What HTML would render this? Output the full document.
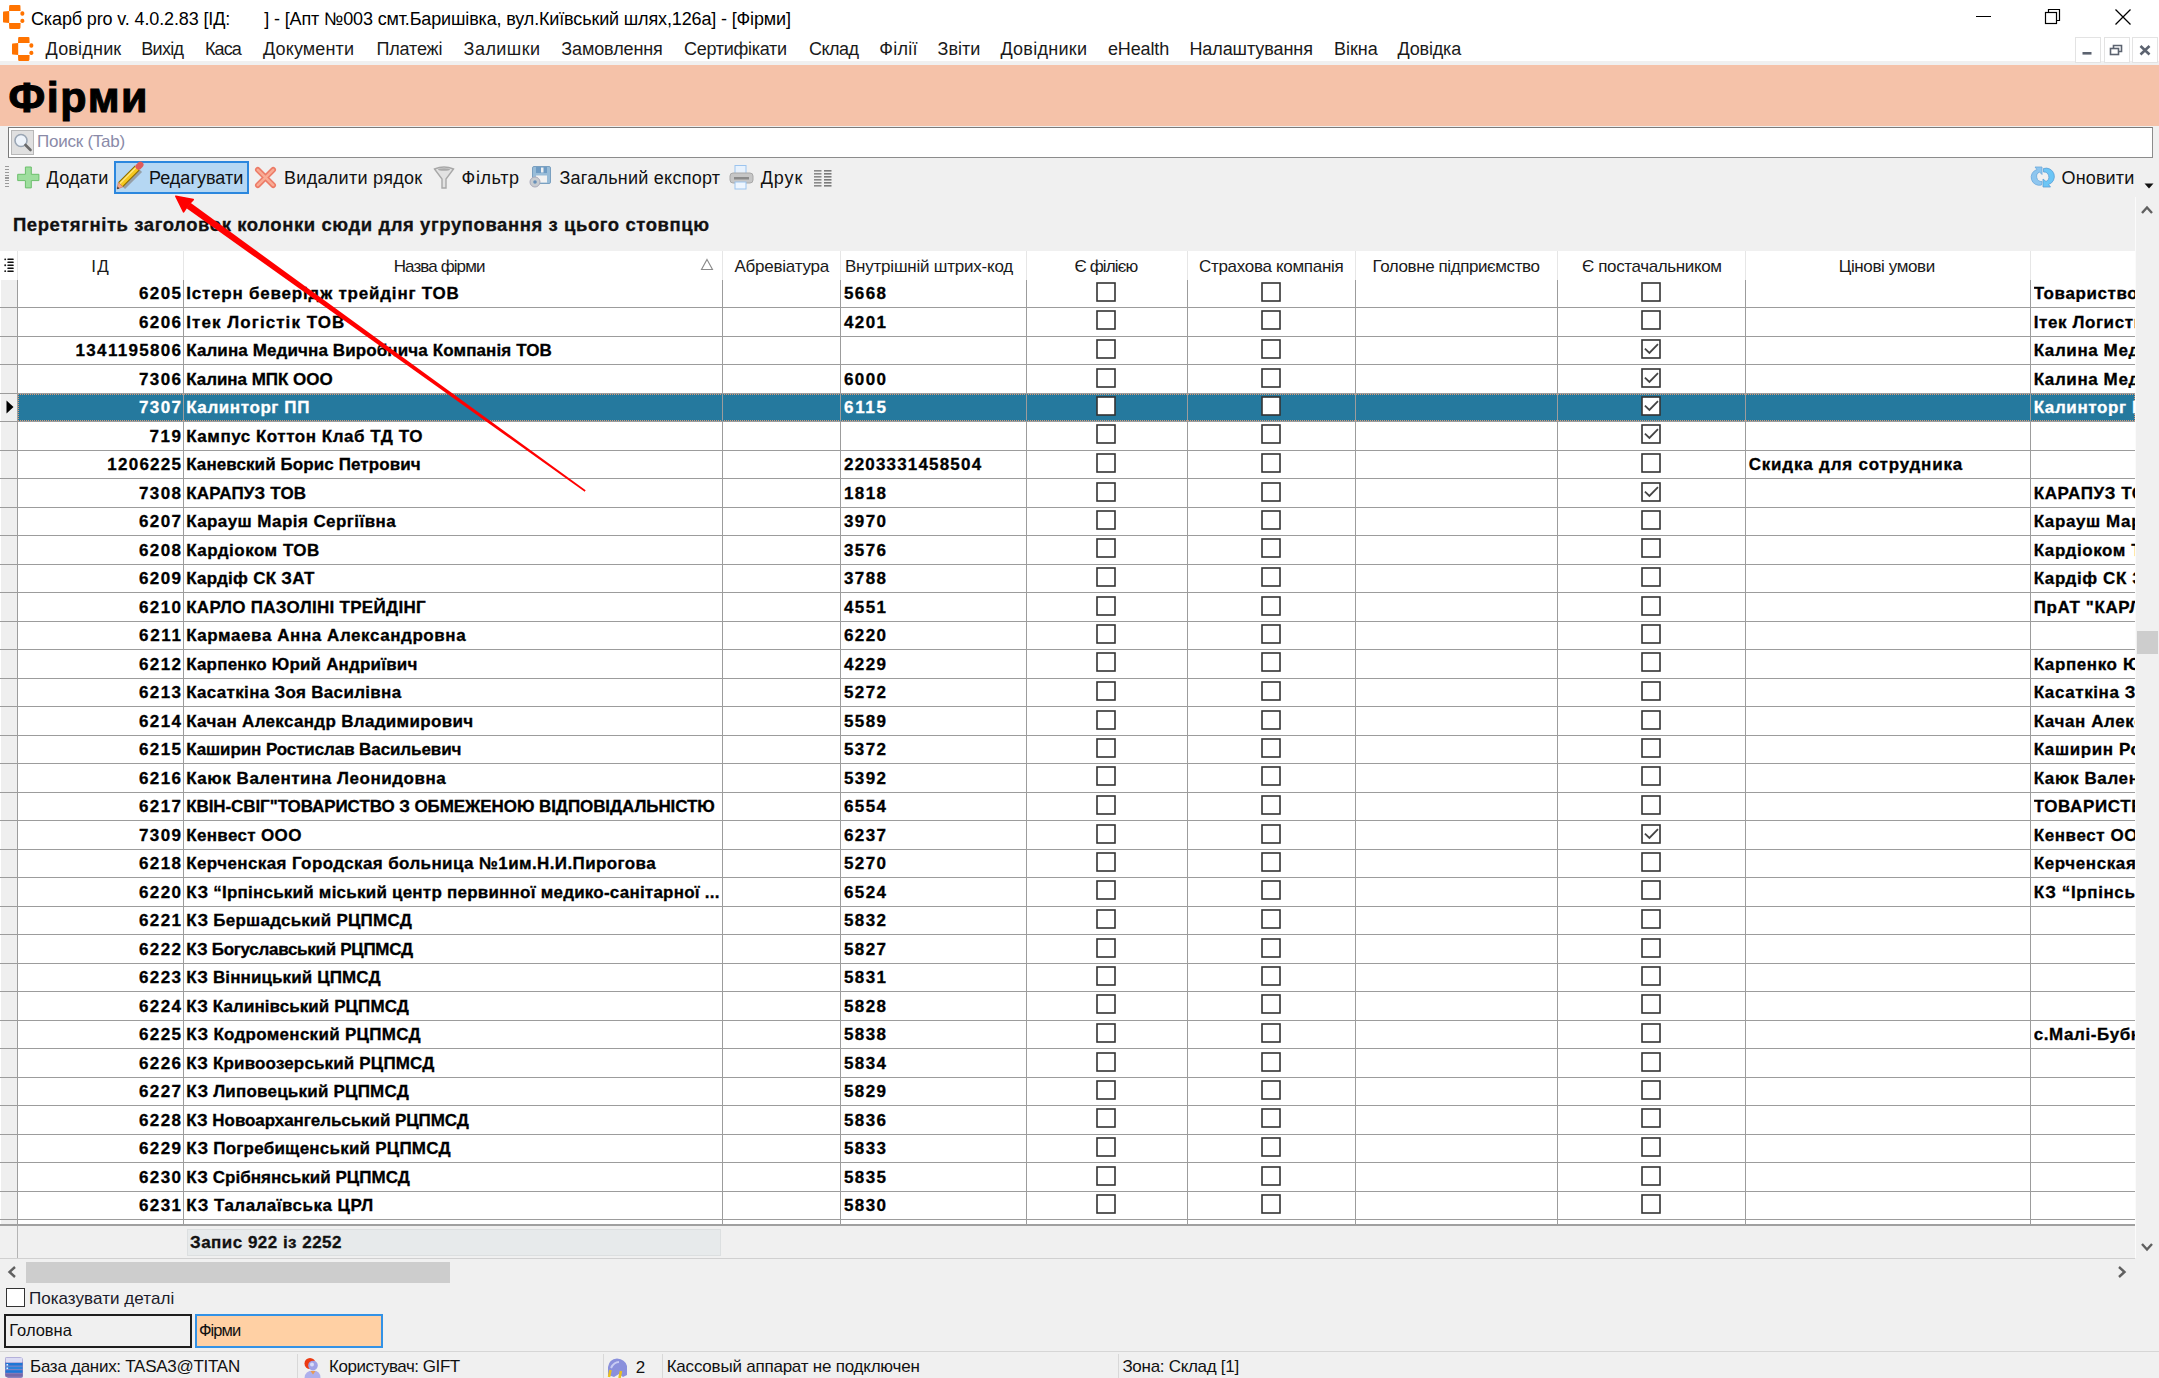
<!DOCTYPE html>
<html><head><meta charset="utf-8"><title>Фірми</title>
<style>
html,body{margin:0;padding:0;}
body{width:2159px;height:1378px;position:relative;overflow:hidden;background:#f0f0f0;font-family:"Liberation Sans", sans-serif;}
.t{position:absolute;white-space:pre;}
.r{position:absolute;}
svg.r{overflow:visible;}
</style></head><body>
<div class="r" style="left:0px;top:0px;width:2159px;height:61px;background:#ffffff;"></div>
<div class="r" style="left:0px;top:61px;width:2159px;height:4px;background:#f0f0f0;"></div>
<div class="r" style="left:0px;top:65px;width:2159px;height:61px;background:#f5c2a9;"></div>
<div class="r" style="left:0px;top:126px;width:2159px;height:1252px;background:#f0f0f0;"></div>
<svg class="r" style="left:3.3px;top:4.9px;" width="22" height="24" viewBox="0 0 22 24"><path d="M6.2 0.6 Q6.4 0 7.2 0 H16.4 Q17.2 0 17.4 0.8 L17.6 6 H6 Z" fill="#ff7300"/><path d="M0.6 6.4 Q0 6.6 0 7.4 V16.6 Q0 17.4 0.6 17.6 L6.2 17.9 V6 Z" fill="#ff7300"/><path d="M6 17.9 H17.6 L17.4 23.1 Q17.2 23.9 16.4 23.9 H7.2 Q6.4 23.9 6.2 23.3 Z" fill="#ff7300"/><rect x="17.4" y="6.3" width="3.9" height="4.4" rx="1.8" fill="#ff7300"/><rect x="17.4" y="13.7" width="3.9" height="4.4" rx="1.8" fill="#ff7300"/></svg>
<div class="t" style="left:31.00px;top:9.76px;font-size:18px;line-height:18px;color:#000;letter-spacing:-0.131px;">Скарб pro v. 4.0.2.83 [ІД:</div>
<div class="t" style="left:264.30px;top:9.76px;font-size:18px;line-height:18px;color:#000;letter-spacing:-0.143px;">] - [Апт №003 смт.Баришівка, вул.Київський шлях,126а] - [Фірми]</div>
<div class="r" style="left:1976px;top:16px;width:15px;height:1px;background:#000;"></div>
<svg class="r" style="left:2043px;top:7px;" width="20" height="20" viewBox="0 0 20 20"><rect x="2.5" y="5.5" width="11" height="11" fill="none" stroke="#000" stroke-width="1.2"/><path d="M5.5 5.5 V2.5 H16.5 V13.5 H13.5" fill="none" stroke="#000" stroke-width="1.2"/></svg>
<svg class="r" style="left:2114px;top:8px;" width="18" height="18" viewBox="0 0 18 18"><path d="M1.5 1.5 L16.5 16.5 M16.5 1.5 L1.5 16.5" stroke="#000" stroke-width="1.3"/></svg>
<svg class="r" style="left:11.9px;top:36.5px;" width="22" height="24" viewBox="0 0 22 24"><path d="M6.2 0.6 Q6.4 0 7.2 0 H16.4 Q17.2 0 17.4 0.8 L17.6 6 H6 Z" fill="#ff7300"/><path d="M0.6 6.4 Q0 6.6 0 7.4 V16.6 Q0 17.4 0.6 17.6 L6.2 17.9 V6 Z" fill="#ff7300"/><path d="M6 17.9 H17.6 L17.4 23.1 Q17.2 23.9 16.4 23.9 H7.2 Q6.4 23.9 6.2 23.3 Z" fill="#ff7300"/><rect x="17.4" y="6.3" width="3.9" height="4.4" rx="1.8" fill="#ff7300"/><rect x="17.4" y="13.7" width="3.9" height="4.4" rx="1.8" fill="#ff7300"/></svg>
<div class="t" style="left:45.60px;top:40.36px;font-size:18px;line-height:18px;color:#1a1a1a;letter-spacing:0.188px;">Довідник</div>
<div class="t" style="left:141.25px;top:40.36px;font-size:18px;line-height:18px;color:#1a1a1a;letter-spacing:-0.701px;">Вихід</div>
<div class="t" style="left:205.00px;top:40.36px;font-size:18px;line-height:18px;color:#1a1a1a;letter-spacing:-0.885px;">Каса</div>
<div class="t" style="left:263.00px;top:40.36px;font-size:18px;line-height:18px;color:#1a1a1a;letter-spacing:0.144px;">Документи</div>
<div class="t" style="left:376.50px;top:40.36px;font-size:18px;line-height:18px;color:#1a1a1a;letter-spacing:-0.166px;">Платежі</div>
<div class="t" style="left:463.60px;top:40.36px;font-size:18px;line-height:18px;color:#1a1a1a;letter-spacing:0.458px;">Залишки</div>
<div class="t" style="left:561.30px;top:40.36px;font-size:18px;line-height:18px;color:#1a1a1a;letter-spacing:-0.111px;">Замовлення</div>
<div class="t" style="left:684.00px;top:40.36px;font-size:18px;line-height:18px;color:#1a1a1a;letter-spacing:-0.296px;">Сертифікати</div>
<div class="t" style="left:808.90px;top:40.36px;font-size:18px;line-height:18px;color:#1a1a1a;letter-spacing:-0.483px;">Склад</div>
<div class="t" style="left:879.30px;top:40.36px;font-size:18px;line-height:18px;color:#1a1a1a;letter-spacing:0.268px;">Філії</div>
<div class="t" style="left:937.50px;top:40.36px;font-size:18px;line-height:18px;color:#1a1a1a;letter-spacing:0.006px;">Звіти</div>
<div class="t" style="left:1000.40px;top:40.36px;font-size:18px;line-height:18px;color:#1a1a1a;letter-spacing:0.269px;">Довідники</div>
<div class="t" style="left:1107.90px;top:40.36px;font-size:18px;line-height:18px;color:#1a1a1a;letter-spacing:-0.131px;">eHealth</div>
<div class="t" style="left:1189.40px;top:40.36px;font-size:18px;line-height:18px;color:#1a1a1a;letter-spacing:-0.078px;">Налаштування</div>
<div class="t" style="left:1333.90px;top:40.36px;font-size:18px;line-height:18px;color:#1a1a1a;letter-spacing:0.004px;">Вікна</div>
<div class="t" style="left:1397.60px;top:40.36px;font-size:18px;line-height:18px;color:#1a1a1a;letter-spacing:-0.198px;">Довідка</div>
<div class="r" style="left:2075px;top:37px;width:26px;height:26px;background:#ffffff;border:1px solid #e3e3e3;box-sizing:border-box;"></div>
<div class="r" style="left:2104px;top:37px;width:26px;height:26px;background:#ffffff;border:1px solid #e3e3e3;box-sizing:border-box;"></div>
<div class="r" style="left:2132px;top:37px;width:26px;height:26px;background:#ffffff;border:1px solid #e3e3e3;box-sizing:border-box;"></div>
<svg class="r" style="left:2074px;top:37px;" width="26" height="26" viewBox="0 0 26 26"><rect x="8.5" y="15" width="9" height="2.6" fill="#5c6370"/></svg>
<svg class="r" style="left:2103px;top:37px;" width="26" height="26" viewBox="0 0 26 26"><rect x="7.5" y="11.5" width="8" height="6" fill="none" stroke="#5c6370" stroke-width="1.6"/><path d="M10.5 11 V8.5 H18.5 V14.5 H16" fill="none" stroke="#5c6370" stroke-width="1.6"/></svg>
<svg class="r" style="left:2132px;top:37px;" width="26" height="26" viewBox="0 0 26 26"><path d="M8.5 9 L17.5 17.5 M17.5 9 L8.5 17.5" stroke="#5c6370" stroke-width="2.6"/></svg>
<div class="t" style="left:8.50px;top:76.10px;font-size:43px;line-height:43px;font-weight:bold;-webkit-text-stroke:0.3px;color:#000;letter-spacing:1.604px;-webkit-text-stroke:1.1px #000;">Фірми</div>
<div class="r" style="left:8px;top:127px;width:2145px;height:31px;background:#ffffff;border:1.5px solid #7a7a7a;box-sizing:border-box;border-right-color:#8c8c8c;border-bottom-color:#8c8c8c;"></div>
<div class="r" style="left:11px;top:130px;width:23px;height:25px;background:#e0e0e0;border:1px solid #b8b8b8;box-sizing:border-box;"></div>
<svg class="r" style="left:11px;top:130px;" width="23" height="24" viewBox="0 0 23 24"><circle cx="10" cy="10.5" r="6" fill="#eef4fb" stroke="#9aa6b4" stroke-width="1.6"/><path d="M14.5 15 L19.5 20" stroke="#6a6a6a" stroke-width="2.6" stroke-linecap="round"/></svg>
<div class="t" style="left:37.00px;top:133.11px;font-size:17px;line-height:17px;color:#8a8aa8;letter-spacing:-0.237px;">Поиск (Tab)</div>
<div class="r" style="left:5px;top:166.0px;width:4px;height:1.2px;background:#9a9a9a;"></div>
<div class="r" style="left:5px;top:168.85px;width:4px;height:1.2px;background:#9a9a9a;"></div>
<div class="r" style="left:5px;top:171.7px;width:4px;height:1.2px;background:#9a9a9a;"></div>
<div class="r" style="left:5px;top:174.55px;width:4px;height:1.2px;background:#9a9a9a;"></div>
<div class="r" style="left:5px;top:177.4px;width:4px;height:1.2px;background:#9a9a9a;"></div>
<div class="r" style="left:5px;top:180.25px;width:4px;height:1.2px;background:#9a9a9a;"></div>
<div class="r" style="left:5px;top:183.1px;width:4px;height:1.2px;background:#9a9a9a;"></div>
<div class="r" style="left:5px;top:185.95px;width:4px;height:1.2px;background:#9a9a9a;"></div>
<svg class="r" style="left:17px;top:166px;" width="23" height="23" viewBox="0 0 23 23"><path d="M8.4 1 H14.3 V8.3 H21.9 V14.6 H14.3 V21.9 H8.4 V14.6 H0.7 V8.3 H8.4 Z" fill="#9ede9e" stroke="#6cbf6c" stroke-width="1"/></svg>
<div class="t" style="left:46.50px;top:168.76px;font-size:18px;line-height:18px;color:#111;letter-spacing:0.264px;">Додати</div>
<div class="r" style="left:114px;top:161px;width:135px;height:33px;background:#b5d7f3;border:2px solid #2b87de;box-sizing:border-box;"></div>
<svg class="r" style="left:116px;top:162px;" width="30" height="30" viewBox="0 0 30 30"><path d="M7.5 25.5 L24.5 8.5" stroke="#8c8c8c" stroke-opacity="0.75" stroke-width="4.5"/><path d="M4.6 22.6 L21.6 5.6" stroke="#8a6a00" stroke-width="7"/><path d="M4.6 22.6 L21.6 5.6" stroke="#f6c81c" stroke-width="4.8"/><path d="M4.6 22.6 L21.6 5.6" stroke="#fde680" stroke-width="1.4" transform="translate(-0.9,-0.9)"/><path d="M21 6.2 L23 4.2" stroke="#c0c0c0" stroke-width="6.6"/><path d="M22.6 4.6 L24.4 2.8" stroke="#e05a5a" stroke-width="6.2" stroke-linecap="round"/><path d="M2.3 20.3 L6.9 24.9 L1 27 Z" fill="#f4a888" stroke="#c87858" stroke-width="0.6"/><path d="M1.6 24.6 L3.4 26.4 L1 27 Z" fill="#303030"/></svg>
<div class="t" style="left:149.00px;top:168.76px;font-size:18px;line-height:18px;color:#111;letter-spacing:0.008px;">Редагувати</div>
<svg class="r" style="left:254px;top:166px;" width="23" height="23" viewBox="0 0 23 23"><path d="M3.8 3.8 L19.2 19.2 M19.2 3.8 L3.8 19.2" stroke="#ec7a66" stroke-width="5.6" stroke-linecap="round"/><path d="M3.8 3.8 L19.2 19.2 M19.2 3.8 L3.8 19.2" stroke="#f9ab94" stroke-width="2.6" stroke-linecap="round"/></svg>
<div class="t" style="left:284.00px;top:168.76px;font-size:18px;line-height:18px;color:#111;letter-spacing:0.298px;">Видалити рядок</div>
<svg class="r" style="left:432px;top:164px;" width="24" height="26" viewBox="0 0 24 26"><path d="M2.5 5 Q12 1 21.5 5 L14 15 V24 H10 V15 Z" fill="#e2e2e2" stroke="#a8a8a8" stroke-width="1.4"/><ellipse cx="12" cy="5.5" rx="6" ry="1.3" fill="#aaa"/></svg>
<div class="t" style="left:461.60px;top:168.76px;font-size:18px;line-height:18px;color:#111;letter-spacing:0.608px;">Фільтр</div>
<svg class="r" style="left:529px;top:165px;" width="24" height="24" viewBox="0 0 24 24"><rect x="3.5" y="1.5" width="18" height="17" rx="1.5" fill="#98bcd8" stroke="#7aa0c0"/><rect x="7" y="2" width="11" height="6" fill="#6f9cc4"/><rect x="12" y="2.5" width="2.5" height="5" fill="#f0f0f0"/><rect x="7" y="10.5" width="11" height="7" fill="#f2f2f2"/><circle cx="6" cy="17" r="5" fill="#c8ccd0" stroke="#aab" stroke-width="1"/><circle cx="6" cy="17" r="1.8" fill="#6890b8"/></svg>
<div class="t" style="left:559.40px;top:168.76px;font-size:18px;line-height:18px;color:#111;letter-spacing:0.247px;">Загальний експорт</div>
<svg class="r" style="left:729px;top:165px;" width="26" height="25" viewBox="0 0 26 25"><rect x="6" y="0.5" width="11" height="9" fill="#e8f2fd" stroke="#9cc4ee"/><rect x="1" y="8" width="23" height="10" rx="3" fill="#c6c6c6" stroke="#a8a8a8"/><rect x="5" y="12" width="15" height="2.5" fill="#8a8a8a"/><rect x="6" y="17" width="11" height="7" fill="#eef6ff" stroke="#9cc4ee"/></svg>
<div class="t" style="left:760.80px;top:168.76px;font-size:18px;line-height:18px;color:#111;letter-spacing:0.862px;">Друк</div>
<svg class="r" style="left:813px;top:169px;" width="21" height="19" viewBox="0 0 21 19"><rect x="1" y="1" width="7.5" height="1.6" fill="#8a8a8a"/><rect x="11" y="1" width="7.5" height="1.6" fill="#7a7a7a"/><rect x="1" y="4" width="7.5" height="1.6" fill="#8a8a8a"/><rect x="11" y="4" width="7.5" height="1.6" fill="#7a7a7a"/><rect x="1" y="7" width="7.5" height="1.6" fill="#8a8a8a"/><rect x="11" y="7" width="7.5" height="1.6" fill="#7a7a7a"/><rect x="1" y="10" width="7.5" height="1.6" fill="#8a8a8a"/><rect x="11" y="10" width="7.5" height="1.6" fill="#7a7a7a"/><rect x="1" y="13" width="7.5" height="1.6" fill="#8a8a8a"/><rect x="11" y="13" width="7.5" height="1.6" fill="#7a7a7a"/><rect x="1" y="16" width="7.5" height="1.6" fill="#8a8a8a"/><rect x="11" y="16" width="7.5" height="1.6" fill="#7a7a7a"/></svg>
<svg class="r" style="left:2031px;top:165px;" width="25" height="25" viewBox="0 0 25 25"><path d="M11 2 H4 L6 4.5 A8 8 0 0 0 10.5 20 L11 16.5 A5 5 0 0 1 8.5 7 L11 9.5 Z" fill="#8ec6ef" stroke="#6aa8dc" stroke-width="0.8"/><path d="M12 22 H19.5 L17.5 19.5 A8 8 0 0 0 12.5 3.5 L12.5 7 A5 5 0 0 1 15 16.5 L12 14 Z" fill="#6cc6f6" stroke="#5a9ed6" stroke-width="0.8"/></svg>
<div class="t" style="left:2061.50px;top:168.76px;font-size:18px;line-height:18px;color:#111;letter-spacing:0.148px;">Оновити</div>
<svg class="r" style="left:2141px;top:180px;" width="16" height="12" viewBox="0 0 16 12"><path d="M3.5 3.5 H12.5 L8 8.5 Z" fill="#111"/></svg>
<div class="t" style="left:13.00px;top:216.04px;font-size:18.5px;line-height:18.5px;font-weight:bold;-webkit-text-stroke:0.3px;color:#111;letter-spacing:0.575px;">Перетягніть заголовок колонки сюди для угруповання з цього стовпцю</div>
<div class="r" style="left:0px;top:251px;width:2135px;height:1007px;background:#ffffff;"></div>
<div class="r" style="left:17px;top:251px;width:1px;height:29px;background:#e6e6e6;"></div>
<div class="r" style="left:183px;top:251px;width:1px;height:29px;background:#e6e6e6;"></div>
<div class="r" style="left:722px;top:251px;width:1px;height:29px;background:#e6e6e6;"></div>
<div class="r" style="left:840px;top:251px;width:1px;height:29px;background:#e6e6e6;"></div>
<div class="r" style="left:1026px;top:251px;width:1px;height:29px;background:#e6e6e6;"></div>
<div class="r" style="left:1187px;top:251px;width:1px;height:29px;background:#e6e6e6;"></div>
<div class="r" style="left:1355px;top:251px;width:1px;height:29px;background:#e6e6e6;"></div>
<div class="r" style="left:1557px;top:251px;width:1px;height:29px;background:#e6e6e6;"></div>
<div class="r" style="left:1745px;top:251px;width:1px;height:29px;background:#e6e6e6;"></div>
<div class="r" style="left:2030px;top:251px;width:1px;height:29px;background:#e6e6e6;"></div>
<svg class="r" style="left:3px;top:257px;" width="14" height="16" viewBox="0 0 14 16"><rect x="4.4" y="1.55" width="6.3" height="1.5" rx="0.5" fill="#111"/><rect x="4.4" y="4.53" width="6.3" height="1.5" rx="0.5" fill="#111"/><rect x="4.4" y="7.51" width="6.3" height="1.5" rx="0.5" fill="#111"/><rect x="4.4" y="10.49" width="6.3" height="1.5" rx="0.5" fill="#111"/><rect x="4.4" y="13.47" width="6.3" height="1.5" rx="0.5" fill="#111"/><rect x="1.3" y="1.40" width="1.8" height="1.8" rx="0.6" fill="#222"/><rect x="1.3" y="7.36" width="1.8" height="1.8" rx="0.6" fill="#222"/><rect x="1.3" y="13.32" width="1.8" height="1.8" rx="0.6" fill="#222"/></svg>
<div class="t" style="left:91.25px;top:258.11px;font-size:17px;line-height:17px;color:#1a1a1a;letter-spacing:1.190px;">ІД</div>
<div class="t" style="left:393.75px;top:258.11px;font-size:17px;line-height:17px;color:#1a1a1a;letter-spacing:-0.908px;">Назва фірми</div>
<div class="t" style="left:734.50px;top:258.11px;font-size:17px;line-height:17px;color:#1a1a1a;letter-spacing:-0.239px;">Абревіатура</div>
<div class="t" style="left:845.00px;top:258.11px;font-size:17px;line-height:17px;color:#1a1a1a;letter-spacing:-0.224px;">Внутрішній штрих-код</div>
<div class="t" style="left:1074.50px;top:258.11px;font-size:17px;line-height:17px;color:#1a1a1a;letter-spacing:-0.877px;">Є філією</div>
<div class="t" style="left:1199.00px;top:258.11px;font-size:17px;line-height:17px;color:#1a1a1a;letter-spacing:-0.305px;">Страхова компанія</div>
<div class="t" style="left:1372.50px;top:258.11px;font-size:17px;line-height:17px;color:#1a1a1a;letter-spacing:-0.414px;">Головне підприємство</div>
<div class="t" style="left:1582.00px;top:258.11px;font-size:17px;line-height:17px;color:#1a1a1a;letter-spacing:-0.369px;">Є постачальником</div>
<div class="t" style="left:1838.80px;top:258.11px;font-size:17px;line-height:17px;color:#1a1a1a;letter-spacing:-0.394px;">Цінові умови</div>
<svg class="r" style="left:700px;top:258px;" width="14" height="14" viewBox="0 0 14 14"><path d="M7 1.5 L12.5 11.5 H1.5 Z" fill="none" stroke="#8a8a8a" stroke-width="1.1"/></svg>
<div class="r" style="left:1px;top:280px;width:16px;height:945px;background:#efefef;"></div>
<div class="t" style="right:1978.00px;top:285.31px;font-size:17px;line-height:17px;font-weight:bold;-webkit-text-stroke:0.3px;color:#000;text-align:right;letter-spacing:1.381px;margin-right:-1.381px;">6205</div>
<div class="t" style="left:186.20px;top:285.31px;font-size:17px;line-height:17px;font-weight:bold;-webkit-text-stroke:0.3px;color:#000;letter-spacing:0.792px;">Істерн беверідж трейдінг ТОВ</div>
<div class="t" style="left:844.00px;top:285.31px;font-size:17px;line-height:17px;font-weight:bold;-webkit-text-stroke:0.3px;color:#000;letter-spacing:1.381px;">5668</div>
<div class="t" style="left:2033.70px;top:285.31px;font-size:17px;line-height:17px;font-weight:bold;-webkit-text-stroke:0.3px;color:#000;letter-spacing:0.600px;width:101px;overflow:hidden;">Товариство з обмеженою</div>
<svg class="r" style="left:1096px;top:282px;" width="20" height="20" viewBox="0 0 20 20"><rect x="1" y="1" width="18" height="18" fill="#fff" stroke="#333" stroke-width="1.6"/></svg>
<svg class="r" style="left:1261px;top:282px;" width="20" height="20" viewBox="0 0 20 20"><rect x="1" y="1" width="18" height="18" fill="#fff" stroke="#333" stroke-width="1.6"/></svg>
<svg class="r" style="left:1641px;top:282px;" width="20" height="20" viewBox="0 0 20 20"><rect x="1" y="1" width="18" height="18" fill="#fff" stroke="#333" stroke-width="1.6"/></svg>
<div class="t" style="right:1978.00px;top:314.31px;font-size:17px;line-height:17px;font-weight:bold;-webkit-text-stroke:0.3px;color:#000;text-align:right;letter-spacing:1.381px;margin-right:-1.381px;">6206</div>
<div class="t" style="left:186.20px;top:314.31px;font-size:17px;line-height:17px;font-weight:bold;-webkit-text-stroke:0.3px;color:#000;letter-spacing:1.071px;">Ітек Логістік ТОВ</div>
<div class="t" style="left:844.00px;top:314.31px;font-size:17px;line-height:17px;font-weight:bold;-webkit-text-stroke:0.3px;color:#000;letter-spacing:1.381px;">4201</div>
<div class="t" style="left:2033.70px;top:314.31px;font-size:17px;line-height:17px;font-weight:bold;-webkit-text-stroke:0.3px;color:#000;letter-spacing:0.600px;width:101px;overflow:hidden;">Ітек Логистик ТОВ</div>
<svg class="r" style="left:1096px;top:310px;" width="20" height="20" viewBox="0 0 20 20"><rect x="1" y="1" width="18" height="18" fill="#fff" stroke="#333" stroke-width="1.6"/></svg>
<svg class="r" style="left:1261px;top:310px;" width="20" height="20" viewBox="0 0 20 20"><rect x="1" y="1" width="18" height="18" fill="#fff" stroke="#333" stroke-width="1.6"/></svg>
<svg class="r" style="left:1641px;top:310px;" width="20" height="20" viewBox="0 0 20 20"><rect x="1" y="1" width="18" height="18" fill="#fff" stroke="#333" stroke-width="1.6"/></svg>
<div class="t" style="right:1978.00px;top:342.31px;font-size:17px;line-height:17px;font-weight:bold;-webkit-text-stroke:0.3px;color:#000;text-align:right;letter-spacing:1.309px;margin-right:-1.309px;">1341195806</div>
<div class="t" style="left:186.20px;top:342.31px;font-size:17px;line-height:17px;font-weight:bold;-webkit-text-stroke:0.3px;color:#000;letter-spacing:0.113px;">Калина Медична Виробнича Компанія ТОВ</div>
<div class="t" style="left:2033.70px;top:342.31px;font-size:17px;line-height:17px;font-weight:bold;-webkit-text-stroke:0.3px;color:#000;letter-spacing:0.600px;width:101px;overflow:hidden;">Калина Медична</div>
<svg class="r" style="left:1096px;top:339px;" width="20" height="20" viewBox="0 0 20 20"><rect x="1" y="1" width="18" height="18" fill="#fff" stroke="#333" stroke-width="1.6"/></svg>
<svg class="r" style="left:1261px;top:339px;" width="20" height="20" viewBox="0 0 20 20"><rect x="1" y="1" width="18" height="18" fill="#fff" stroke="#333" stroke-width="1.6"/></svg>
<svg class="r" style="left:1641px;top:339px;" width="20" height="20" viewBox="0 0 20 20"><rect x="1" y="1" width="18" height="18" fill="#fff" stroke="#333" stroke-width="1.6"/><path d="M3.9 9.6 L8.4 13.9 L17 5.2" fill="none" stroke="#454545" stroke-width="1.8"/></svg>
<div class="t" style="right:1978.00px;top:371.31px;font-size:17px;line-height:17px;font-weight:bold;-webkit-text-stroke:0.3px;color:#000;text-align:right;letter-spacing:1.381px;margin-right:-1.381px;">7306</div>
<div class="t" style="left:186.20px;top:371.31px;font-size:17px;line-height:17px;font-weight:bold;-webkit-text-stroke:0.3px;color:#000;letter-spacing:-0.035px;">Калина МПК ООО</div>
<div class="t" style="left:844.00px;top:371.31px;font-size:17px;line-height:17px;font-weight:bold;-webkit-text-stroke:0.3px;color:#000;letter-spacing:1.381px;">6000</div>
<div class="t" style="left:2033.70px;top:371.31px;font-size:17px;line-height:17px;font-weight:bold;-webkit-text-stroke:0.3px;color:#000;letter-spacing:0.600px;width:101px;overflow:hidden;">Калина Медична</div>
<svg class="r" style="left:1096px;top:368px;" width="20" height="20" viewBox="0 0 20 20"><rect x="1" y="1" width="18" height="18" fill="#fff" stroke="#333" stroke-width="1.6"/></svg>
<svg class="r" style="left:1261px;top:368px;" width="20" height="20" viewBox="0 0 20 20"><rect x="1" y="1" width="18" height="18" fill="#fff" stroke="#333" stroke-width="1.6"/></svg>
<svg class="r" style="left:1641px;top:368px;" width="20" height="20" viewBox="0 0 20 20"><rect x="1" y="1" width="18" height="18" fill="#fff" stroke="#333" stroke-width="1.6"/><path d="M3.9 9.6 L8.4 13.9 L17 5.2" fill="none" stroke="#454545" stroke-width="1.8"/></svg>
<div class="r" style="left:18px;top:394px;width:2117px;height:27px;background:#25799e;"></div>
<div class="r" style="left:18px;top:394px;width:2117px;height:27px;box-sizing:border-box;border:1px dotted #d89a78;"></div>
<svg class="r" style="left:5px;top:399px;" width="10" height="16" viewBox="0 0 10 16"><path d="M1.5 1.5 L8.5 8 L1.5 14.5 Z" fill="#000"/></svg>
<div class="t" style="right:1978.00px;top:399.31px;font-size:17px;line-height:17px;font-weight:bold;-webkit-text-stroke:0.3px;color:#ffffff;text-align:right;letter-spacing:1.381px;margin-right:-1.381px;">7307</div>
<div class="t" style="left:186.20px;top:399.31px;font-size:17px;line-height:17px;font-weight:bold;-webkit-text-stroke:0.3px;color:#ffffff;letter-spacing:0.593px;">Калинторг ПП</div>
<div class="t" style="left:844.00px;top:399.31px;font-size:17px;line-height:17px;font-weight:bold;-webkit-text-stroke:0.3px;color:#ffffff;letter-spacing:1.693px;">6115</div>
<div class="t" style="left:2033.70px;top:399.31px;font-size:17px;line-height:17px;font-weight:bold;-webkit-text-stroke:0.3px;color:#ffffff;letter-spacing:0.600px;width:101px;overflow:hidden;">Калинторг ПП</div>
<svg class="r" style="left:1096px;top:396px;" width="20" height="20" viewBox="0 0 20 20"><rect x="1" y="1" width="18" height="18" fill="#fff" stroke="#333" stroke-width="1.6"/></svg>
<svg class="r" style="left:1261px;top:396px;" width="20" height="20" viewBox="0 0 20 20"><rect x="1" y="1" width="18" height="18" fill="#fff" stroke="#333" stroke-width="1.6"/></svg>
<svg class="r" style="left:1641px;top:396px;" width="20" height="20" viewBox="0 0 20 20"><rect x="1" y="1" width="18" height="18" fill="#fff" stroke="#333" stroke-width="1.6"/><path d="M3.9 9.6 L8.4 13.9 L17 5.2" fill="none" stroke="#454545" stroke-width="1.8"/></svg>
<div class="t" style="right:1978.00px;top:428.31px;font-size:17px;line-height:17px;font-weight:bold;-webkit-text-stroke:0.3px;color:#000;text-align:right;letter-spacing:1.513px;margin-right:-1.513px;">719</div>
<div class="t" style="left:186.20px;top:428.31px;font-size:17px;line-height:17px;font-weight:bold;-webkit-text-stroke:0.3px;color:#000;letter-spacing:0.527px;">Кампус Коттон Клаб ТД ТО</div>
<svg class="r" style="left:1096px;top:424px;" width="20" height="20" viewBox="0 0 20 20"><rect x="1" y="1" width="18" height="18" fill="#fff" stroke="#333" stroke-width="1.6"/></svg>
<svg class="r" style="left:1261px;top:424px;" width="20" height="20" viewBox="0 0 20 20"><rect x="1" y="1" width="18" height="18" fill="#fff" stroke="#333" stroke-width="1.6"/></svg>
<svg class="r" style="left:1641px;top:424px;" width="20" height="20" viewBox="0 0 20 20"><rect x="1" y="1" width="18" height="18" fill="#fff" stroke="#333" stroke-width="1.6"/><path d="M3.9 9.6 L8.4 13.9 L17 5.2" fill="none" stroke="#454545" stroke-width="1.8"/></svg>
<div class="t" style="right:1978.00px;top:456.31px;font-size:17px;line-height:17px;font-weight:bold;-webkit-text-stroke:0.3px;color:#000;text-align:right;letter-spacing:1.249px;margin-right:-1.249px;">1206225</div>
<div class="t" style="left:186.20px;top:456.31px;font-size:17px;line-height:17px;font-weight:bold;-webkit-text-stroke:0.3px;color:#000;letter-spacing:0.092px;">Каневский Борис Петрович</div>
<div class="t" style="left:844.00px;top:456.31px;font-size:17px;line-height:17px;font-weight:bold;-webkit-text-stroke:0.3px;color:#000;letter-spacing:1.182px;">2203331458504</div>
<div class="t" style="left:1748.70px;top:456.31px;font-size:17px;line-height:17px;font-weight:bold;-webkit-text-stroke:0.3px;color:#000;letter-spacing:0.807px;">Скидка для сотрудника</div>
<svg class="r" style="left:1096px;top:453px;" width="20" height="20" viewBox="0 0 20 20"><rect x="1" y="1" width="18" height="18" fill="#fff" stroke="#333" stroke-width="1.6"/></svg>
<svg class="r" style="left:1261px;top:453px;" width="20" height="20" viewBox="0 0 20 20"><rect x="1" y="1" width="18" height="18" fill="#fff" stroke="#333" stroke-width="1.6"/></svg>
<svg class="r" style="left:1641px;top:453px;" width="20" height="20" viewBox="0 0 20 20"><rect x="1" y="1" width="18" height="18" fill="#fff" stroke="#333" stroke-width="1.6"/></svg>
<div class="t" style="right:1978.00px;top:485.31px;font-size:17px;line-height:17px;font-weight:bold;-webkit-text-stroke:0.3px;color:#000;text-align:right;letter-spacing:1.381px;margin-right:-1.381px;">7308</div>
<div class="t" style="left:186.20px;top:485.31px;font-size:17px;line-height:17px;font-weight:bold;-webkit-text-stroke:0.3px;color:#000;letter-spacing:0.175px;">КАРАПУЗ ТОВ</div>
<div class="t" style="left:844.00px;top:485.31px;font-size:17px;line-height:17px;font-weight:bold;-webkit-text-stroke:0.3px;color:#000;letter-spacing:1.381px;">1818</div>
<div class="t" style="left:2033.70px;top:485.31px;font-size:17px;line-height:17px;font-weight:bold;-webkit-text-stroke:0.3px;color:#000;letter-spacing:0.600px;width:101px;overflow:hidden;">КАРАПУЗ ТОВ</div>
<svg class="r" style="left:1096px;top:482px;" width="20" height="20" viewBox="0 0 20 20"><rect x="1" y="1" width="18" height="18" fill="#fff" stroke="#333" stroke-width="1.6"/></svg>
<svg class="r" style="left:1261px;top:482px;" width="20" height="20" viewBox="0 0 20 20"><rect x="1" y="1" width="18" height="18" fill="#fff" stroke="#333" stroke-width="1.6"/></svg>
<svg class="r" style="left:1641px;top:482px;" width="20" height="20" viewBox="0 0 20 20"><rect x="1" y="1" width="18" height="18" fill="#fff" stroke="#333" stroke-width="1.6"/><path d="M3.9 9.6 L8.4 13.9 L17 5.2" fill="none" stroke="#454545" stroke-width="1.8"/></svg>
<div class="t" style="right:1978.00px;top:513.31px;font-size:17px;line-height:17px;font-weight:bold;-webkit-text-stroke:0.3px;color:#000;text-align:right;letter-spacing:1.381px;margin-right:-1.381px;">6207</div>
<div class="t" style="left:186.20px;top:513.31px;font-size:17px;line-height:17px;font-weight:bold;-webkit-text-stroke:0.3px;color:#000;letter-spacing:0.418px;">Карауш Марія Сергіївна</div>
<div class="t" style="left:844.00px;top:513.31px;font-size:17px;line-height:17px;font-weight:bold;-webkit-text-stroke:0.3px;color:#000;letter-spacing:1.381px;">3970</div>
<div class="t" style="left:2033.70px;top:513.31px;font-size:17px;line-height:17px;font-weight:bold;-webkit-text-stroke:0.3px;color:#000;letter-spacing:0.600px;width:101px;overflow:hidden;">Карауш Марія</div>
<svg class="r" style="left:1096px;top:510px;" width="20" height="20" viewBox="0 0 20 20"><rect x="1" y="1" width="18" height="18" fill="#fff" stroke="#333" stroke-width="1.6"/></svg>
<svg class="r" style="left:1261px;top:510px;" width="20" height="20" viewBox="0 0 20 20"><rect x="1" y="1" width="18" height="18" fill="#fff" stroke="#333" stroke-width="1.6"/></svg>
<svg class="r" style="left:1641px;top:510px;" width="20" height="20" viewBox="0 0 20 20"><rect x="1" y="1" width="18" height="18" fill="#fff" stroke="#333" stroke-width="1.6"/></svg>
<div class="t" style="right:1978.00px;top:542.31px;font-size:17px;line-height:17px;font-weight:bold;-webkit-text-stroke:0.3px;color:#000;text-align:right;letter-spacing:1.381px;margin-right:-1.381px;">6208</div>
<div class="t" style="left:186.20px;top:542.31px;font-size:17px;line-height:17px;font-weight:bold;-webkit-text-stroke:0.3px;color:#000;letter-spacing:0.507px;">Кардіоком ТОВ</div>
<div class="t" style="left:844.00px;top:542.31px;font-size:17px;line-height:17px;font-weight:bold;-webkit-text-stroke:0.3px;color:#000;letter-spacing:1.381px;">3576</div>
<div class="t" style="left:2033.70px;top:542.31px;font-size:17px;line-height:17px;font-weight:bold;-webkit-text-stroke:0.3px;color:#000;letter-spacing:0.600px;width:101px;overflow:hidden;">Кардіоком ТОВ</div>
<svg class="r" style="left:1096px;top:538px;" width="20" height="20" viewBox="0 0 20 20"><rect x="1" y="1" width="18" height="18" fill="#fff" stroke="#333" stroke-width="1.6"/></svg>
<svg class="r" style="left:1261px;top:538px;" width="20" height="20" viewBox="0 0 20 20"><rect x="1" y="1" width="18" height="18" fill="#fff" stroke="#333" stroke-width="1.6"/></svg>
<svg class="r" style="left:1641px;top:538px;" width="20" height="20" viewBox="0 0 20 20"><rect x="1" y="1" width="18" height="18" fill="#fff" stroke="#333" stroke-width="1.6"/></svg>
<div class="t" style="right:1978.00px;top:570.31px;font-size:17px;line-height:17px;font-weight:bold;-webkit-text-stroke:0.3px;color:#000;text-align:right;letter-spacing:1.381px;margin-right:-1.381px;">6209</div>
<div class="t" style="left:186.20px;top:570.31px;font-size:17px;line-height:17px;font-weight:bold;-webkit-text-stroke:0.3px;color:#000;letter-spacing:0.270px;">Кардіф СК ЗАТ</div>
<div class="t" style="left:844.00px;top:570.31px;font-size:17px;line-height:17px;font-weight:bold;-webkit-text-stroke:0.3px;color:#000;letter-spacing:1.381px;">3788</div>
<div class="t" style="left:2033.70px;top:570.31px;font-size:17px;line-height:17px;font-weight:bold;-webkit-text-stroke:0.3px;color:#000;letter-spacing:0.600px;width:101px;overflow:hidden;">Кардіф СК ЗАТ</div>
<svg class="r" style="left:1096px;top:567px;" width="20" height="20" viewBox="0 0 20 20"><rect x="1" y="1" width="18" height="18" fill="#fff" stroke="#333" stroke-width="1.6"/></svg>
<svg class="r" style="left:1261px;top:567px;" width="20" height="20" viewBox="0 0 20 20"><rect x="1" y="1" width="18" height="18" fill="#fff" stroke="#333" stroke-width="1.6"/></svg>
<svg class="r" style="left:1641px;top:567px;" width="20" height="20" viewBox="0 0 20 20"><rect x="1" y="1" width="18" height="18" fill="#fff" stroke="#333" stroke-width="1.6"/></svg>
<div class="t" style="right:1978.00px;top:599.31px;font-size:17px;line-height:17px;font-weight:bold;-webkit-text-stroke:0.3px;color:#000;text-align:right;letter-spacing:1.381px;margin-right:-1.381px;">6210</div>
<div class="t" style="left:186.20px;top:599.31px;font-size:17px;line-height:17px;font-weight:bold;-webkit-text-stroke:0.3px;color:#000;letter-spacing:0.296px;">КАРЛО ПАЗОЛІНІ ТРЕЙДІНГ</div>
<div class="t" style="left:844.00px;top:599.31px;font-size:17px;line-height:17px;font-weight:bold;-webkit-text-stroke:0.3px;color:#000;letter-spacing:1.381px;">4551</div>
<div class="t" style="left:2033.70px;top:599.31px;font-size:17px;line-height:17px;font-weight:bold;-webkit-text-stroke:0.3px;color:#000;letter-spacing:0.600px;width:101px;overflow:hidden;">ПрАТ "КАРЛО</div>
<svg class="r" style="left:1096px;top:596px;" width="20" height="20" viewBox="0 0 20 20"><rect x="1" y="1" width="18" height="18" fill="#fff" stroke="#333" stroke-width="1.6"/></svg>
<svg class="r" style="left:1261px;top:596px;" width="20" height="20" viewBox="0 0 20 20"><rect x="1" y="1" width="18" height="18" fill="#fff" stroke="#333" stroke-width="1.6"/></svg>
<svg class="r" style="left:1641px;top:596px;" width="20" height="20" viewBox="0 0 20 20"><rect x="1" y="1" width="18" height="18" fill="#fff" stroke="#333" stroke-width="1.6"/></svg>
<div class="t" style="right:1978.00px;top:627.31px;font-size:17px;line-height:17px;font-weight:bold;-webkit-text-stroke:0.3px;color:#000;text-align:right;letter-spacing:1.693px;margin-right:-1.693px;">6211</div>
<div class="t" style="left:186.20px;top:627.31px;font-size:17px;line-height:17px;font-weight:bold;-webkit-text-stroke:0.3px;color:#000;letter-spacing:0.572px;">Кармаева Анна Александровна</div>
<div class="t" style="left:844.00px;top:627.31px;font-size:17px;line-height:17px;font-weight:bold;-webkit-text-stroke:0.3px;color:#000;letter-spacing:1.381px;">6220</div>
<svg class="r" style="left:1096px;top:624px;" width="20" height="20" viewBox="0 0 20 20"><rect x="1" y="1" width="18" height="18" fill="#fff" stroke="#333" stroke-width="1.6"/></svg>
<svg class="r" style="left:1261px;top:624px;" width="20" height="20" viewBox="0 0 20 20"><rect x="1" y="1" width="18" height="18" fill="#fff" stroke="#333" stroke-width="1.6"/></svg>
<svg class="r" style="left:1641px;top:624px;" width="20" height="20" viewBox="0 0 20 20"><rect x="1" y="1" width="18" height="18" fill="#fff" stroke="#333" stroke-width="1.6"/></svg>
<div class="t" style="right:1978.00px;top:656.31px;font-size:17px;line-height:17px;font-weight:bold;-webkit-text-stroke:0.3px;color:#000;text-align:right;letter-spacing:1.381px;margin-right:-1.381px;">6212</div>
<div class="t" style="left:186.20px;top:656.31px;font-size:17px;line-height:17px;font-weight:bold;-webkit-text-stroke:0.3px;color:#000;letter-spacing:0.187px;">Карпенко Юрий Андриївич</div>
<div class="t" style="left:844.00px;top:656.31px;font-size:17px;line-height:17px;font-weight:bold;-webkit-text-stroke:0.3px;color:#000;letter-spacing:1.381px;">4229</div>
<div class="t" style="left:2033.70px;top:656.31px;font-size:17px;line-height:17px;font-weight:bold;-webkit-text-stroke:0.3px;color:#000;letter-spacing:0.600px;width:101px;overflow:hidden;">Карпенко Юрій</div>
<svg class="r" style="left:1096px;top:652px;" width="20" height="20" viewBox="0 0 20 20"><rect x="1" y="1" width="18" height="18" fill="#fff" stroke="#333" stroke-width="1.6"/></svg>
<svg class="r" style="left:1261px;top:652px;" width="20" height="20" viewBox="0 0 20 20"><rect x="1" y="1" width="18" height="18" fill="#fff" stroke="#333" stroke-width="1.6"/></svg>
<svg class="r" style="left:1641px;top:652px;" width="20" height="20" viewBox="0 0 20 20"><rect x="1" y="1" width="18" height="18" fill="#fff" stroke="#333" stroke-width="1.6"/></svg>
<div class="t" style="right:1978.00px;top:684.31px;font-size:17px;line-height:17px;font-weight:bold;-webkit-text-stroke:0.3px;color:#000;text-align:right;letter-spacing:1.381px;margin-right:-1.381px;">6213</div>
<div class="t" style="left:186.20px;top:684.31px;font-size:17px;line-height:17px;font-weight:bold;-webkit-text-stroke:0.3px;color:#000;letter-spacing:0.318px;">Касаткіна Зоя Василівна</div>
<div class="t" style="left:844.00px;top:684.31px;font-size:17px;line-height:17px;font-weight:bold;-webkit-text-stroke:0.3px;color:#000;letter-spacing:1.381px;">5272</div>
<div class="t" style="left:2033.70px;top:684.31px;font-size:17px;line-height:17px;font-weight:bold;-webkit-text-stroke:0.3px;color:#000;letter-spacing:0.600px;width:101px;overflow:hidden;">Касаткіна Зоя</div>
<svg class="r" style="left:1096px;top:681px;" width="20" height="20" viewBox="0 0 20 20"><rect x="1" y="1" width="18" height="18" fill="#fff" stroke="#333" stroke-width="1.6"/></svg>
<svg class="r" style="left:1261px;top:681px;" width="20" height="20" viewBox="0 0 20 20"><rect x="1" y="1" width="18" height="18" fill="#fff" stroke="#333" stroke-width="1.6"/></svg>
<svg class="r" style="left:1641px;top:681px;" width="20" height="20" viewBox="0 0 20 20"><rect x="1" y="1" width="18" height="18" fill="#fff" stroke="#333" stroke-width="1.6"/></svg>
<div class="t" style="right:1978.00px;top:713.31px;font-size:17px;line-height:17px;font-weight:bold;-webkit-text-stroke:0.3px;color:#000;text-align:right;letter-spacing:1.381px;margin-right:-1.381px;">6214</div>
<div class="t" style="left:186.20px;top:713.31px;font-size:17px;line-height:17px;font-weight:bold;-webkit-text-stroke:0.3px;color:#000;letter-spacing:0.325px;">Качан Александр Владимирович</div>
<div class="t" style="left:844.00px;top:713.31px;font-size:17px;line-height:17px;font-weight:bold;-webkit-text-stroke:0.3px;color:#000;letter-spacing:1.381px;">5589</div>
<div class="t" style="left:2033.70px;top:713.31px;font-size:17px;line-height:17px;font-weight:bold;-webkit-text-stroke:0.3px;color:#000;letter-spacing:0.600px;width:101px;overflow:hidden;">Качан Александр</div>
<svg class="r" style="left:1096px;top:710px;" width="20" height="20" viewBox="0 0 20 20"><rect x="1" y="1" width="18" height="18" fill="#fff" stroke="#333" stroke-width="1.6"/></svg>
<svg class="r" style="left:1261px;top:710px;" width="20" height="20" viewBox="0 0 20 20"><rect x="1" y="1" width="18" height="18" fill="#fff" stroke="#333" stroke-width="1.6"/></svg>
<svg class="r" style="left:1641px;top:710px;" width="20" height="20" viewBox="0 0 20 20"><rect x="1" y="1" width="18" height="18" fill="#fff" stroke="#333" stroke-width="1.6"/></svg>
<div class="t" style="right:1978.00px;top:741.31px;font-size:17px;line-height:17px;font-weight:bold;-webkit-text-stroke:0.3px;color:#000;text-align:right;letter-spacing:1.381px;margin-right:-1.381px;">6215</div>
<div class="t" style="left:186.20px;top:741.31px;font-size:17px;line-height:17px;font-weight:bold;-webkit-text-stroke:0.3px;color:#000;letter-spacing:-0.097px;">Каширин Ростислав Васильевич</div>
<div class="t" style="left:844.00px;top:741.31px;font-size:17px;line-height:17px;font-weight:bold;-webkit-text-stroke:0.3px;color:#000;letter-spacing:1.381px;">5372</div>
<div class="t" style="left:2033.70px;top:741.31px;font-size:17px;line-height:17px;font-weight:bold;-webkit-text-stroke:0.3px;color:#000;letter-spacing:0.600px;width:101px;overflow:hidden;">Каширин Ростислав</div>
<svg class="r" style="left:1096px;top:738px;" width="20" height="20" viewBox="0 0 20 20"><rect x="1" y="1" width="18" height="18" fill="#fff" stroke="#333" stroke-width="1.6"/></svg>
<svg class="r" style="left:1261px;top:738px;" width="20" height="20" viewBox="0 0 20 20"><rect x="1" y="1" width="18" height="18" fill="#fff" stroke="#333" stroke-width="1.6"/></svg>
<svg class="r" style="left:1641px;top:738px;" width="20" height="20" viewBox="0 0 20 20"><rect x="1" y="1" width="18" height="18" fill="#fff" stroke="#333" stroke-width="1.6"/></svg>
<div class="t" style="right:1978.00px;top:770.31px;font-size:17px;line-height:17px;font-weight:bold;-webkit-text-stroke:0.3px;color:#000;text-align:right;letter-spacing:1.381px;margin-right:-1.381px;">6216</div>
<div class="t" style="left:186.20px;top:770.31px;font-size:17px;line-height:17px;font-weight:bold;-webkit-text-stroke:0.3px;color:#000;letter-spacing:0.524px;">Каюк Валентина Леонидовна</div>
<div class="t" style="left:844.00px;top:770.31px;font-size:17px;line-height:17px;font-weight:bold;-webkit-text-stroke:0.3px;color:#000;letter-spacing:1.381px;">5392</div>
<div class="t" style="left:2033.70px;top:770.31px;font-size:17px;line-height:17px;font-weight:bold;-webkit-text-stroke:0.3px;color:#000;letter-spacing:0.600px;width:101px;overflow:hidden;">Каюк Валентина</div>
<svg class="r" style="left:1096px;top:766px;" width="20" height="20" viewBox="0 0 20 20"><rect x="1" y="1" width="18" height="18" fill="#fff" stroke="#333" stroke-width="1.6"/></svg>
<svg class="r" style="left:1261px;top:766px;" width="20" height="20" viewBox="0 0 20 20"><rect x="1" y="1" width="18" height="18" fill="#fff" stroke="#333" stroke-width="1.6"/></svg>
<svg class="r" style="left:1641px;top:766px;" width="20" height="20" viewBox="0 0 20 20"><rect x="1" y="1" width="18" height="18" fill="#fff" stroke="#333" stroke-width="1.6"/></svg>
<div class="t" style="right:1978.00px;top:798.31px;font-size:17px;line-height:17px;font-weight:bold;-webkit-text-stroke:0.3px;color:#000;text-align:right;letter-spacing:1.381px;margin-right:-1.381px;">6217</div>
<div class="t" style="left:186.20px;top:798.31px;font-size:17px;line-height:17px;font-weight:bold;-webkit-text-stroke:0.3px;color:#000;letter-spacing:-0.082px;">КВІН-СВІГ"ТОВАРИСТВО З ОБМЕЖЕНОЮ ВІДПОВІДАЛЬНІСТЮ</div>
<div class="t" style="left:844.00px;top:798.31px;font-size:17px;line-height:17px;font-weight:bold;-webkit-text-stroke:0.3px;color:#000;letter-spacing:1.381px;">6554</div>
<div class="t" style="left:2033.70px;top:798.31px;font-size:17px;line-height:17px;font-weight:bold;-webkit-text-stroke:0.3px;color:#000;letter-spacing:0.600px;width:101px;overflow:hidden;">ТОВАРИСТВО</div>
<svg class="r" style="left:1096px;top:795px;" width="20" height="20" viewBox="0 0 20 20"><rect x="1" y="1" width="18" height="18" fill="#fff" stroke="#333" stroke-width="1.6"/></svg>
<svg class="r" style="left:1261px;top:795px;" width="20" height="20" viewBox="0 0 20 20"><rect x="1" y="1" width="18" height="18" fill="#fff" stroke="#333" stroke-width="1.6"/></svg>
<svg class="r" style="left:1641px;top:795px;" width="20" height="20" viewBox="0 0 20 20"><rect x="1" y="1" width="18" height="18" fill="#fff" stroke="#333" stroke-width="1.6"/></svg>
<div class="t" style="right:1978.00px;top:827.31px;font-size:17px;line-height:17px;font-weight:bold;-webkit-text-stroke:0.3px;color:#000;text-align:right;letter-spacing:1.381px;margin-right:-1.381px;">7309</div>
<div class="t" style="left:186.20px;top:827.31px;font-size:17px;line-height:17px;font-weight:bold;-webkit-text-stroke:0.3px;color:#000;letter-spacing:0.346px;">Кенвест ООО</div>
<div class="t" style="left:844.00px;top:827.31px;font-size:17px;line-height:17px;font-weight:bold;-webkit-text-stroke:0.3px;color:#000;letter-spacing:1.381px;">6237</div>
<div class="t" style="left:2033.70px;top:827.31px;font-size:17px;line-height:17px;font-weight:bold;-webkit-text-stroke:0.3px;color:#000;letter-spacing:0.600px;width:101px;overflow:hidden;">Кенвест ООО</div>
<svg class="r" style="left:1096px;top:824px;" width="20" height="20" viewBox="0 0 20 20"><rect x="1" y="1" width="18" height="18" fill="#fff" stroke="#333" stroke-width="1.6"/></svg>
<svg class="r" style="left:1261px;top:824px;" width="20" height="20" viewBox="0 0 20 20"><rect x="1" y="1" width="18" height="18" fill="#fff" stroke="#333" stroke-width="1.6"/></svg>
<svg class="r" style="left:1641px;top:824px;" width="20" height="20" viewBox="0 0 20 20"><rect x="1" y="1" width="18" height="18" fill="#fff" stroke="#333" stroke-width="1.6"/><path d="M3.9 9.6 L8.4 13.9 L17 5.2" fill="none" stroke="#454545" stroke-width="1.8"/></svg>
<div class="t" style="right:1978.00px;top:855.31px;font-size:17px;line-height:17px;font-weight:bold;-webkit-text-stroke:0.3px;color:#000;text-align:right;letter-spacing:1.381px;margin-right:-1.381px;">6218</div>
<div class="t" style="left:186.20px;top:855.31px;font-size:17px;line-height:17px;font-weight:bold;-webkit-text-stroke:0.3px;color:#000;letter-spacing:0.390px;">Керченская Городская больница №1им.Н.И.Пирогова</div>
<div class="t" style="left:844.00px;top:855.31px;font-size:17px;line-height:17px;font-weight:bold;-webkit-text-stroke:0.3px;color:#000;letter-spacing:1.381px;">5270</div>
<div class="t" style="left:2033.70px;top:855.31px;font-size:17px;line-height:17px;font-weight:bold;-webkit-text-stroke:0.3px;color:#000;letter-spacing:0.600px;width:101px;overflow:hidden;">Керченская</div>
<svg class="r" style="left:1096px;top:852px;" width="20" height="20" viewBox="0 0 20 20"><rect x="1" y="1" width="18" height="18" fill="#fff" stroke="#333" stroke-width="1.6"/></svg>
<svg class="r" style="left:1261px;top:852px;" width="20" height="20" viewBox="0 0 20 20"><rect x="1" y="1" width="18" height="18" fill="#fff" stroke="#333" stroke-width="1.6"/></svg>
<svg class="r" style="left:1641px;top:852px;" width="20" height="20" viewBox="0 0 20 20"><rect x="1" y="1" width="18" height="18" fill="#fff" stroke="#333" stroke-width="1.6"/></svg>
<div class="t" style="right:1978.00px;top:884.31px;font-size:17px;line-height:17px;font-weight:bold;-webkit-text-stroke:0.3px;color:#000;text-align:right;letter-spacing:1.381px;margin-right:-1.381px;">6220</div>
<div class="t" style="left:186.20px;top:884.31px;font-size:17px;line-height:17px;font-weight:bold;-webkit-text-stroke:0.3px;color:#000;letter-spacing:0.226px;">КЗ “Ірпінський міський центр первинної медико-санітарної ...</div>
<div class="t" style="left:844.00px;top:884.31px;font-size:17px;line-height:17px;font-weight:bold;-webkit-text-stroke:0.3px;color:#000;letter-spacing:1.381px;">6524</div>
<div class="t" style="left:2033.70px;top:884.31px;font-size:17px;line-height:17px;font-weight:bold;-webkit-text-stroke:0.3px;color:#000;letter-spacing:0.600px;width:101px;overflow:hidden;">КЗ “Ірпінський</div>
<svg class="r" style="left:1096px;top:880px;" width="20" height="20" viewBox="0 0 20 20"><rect x="1" y="1" width="18" height="18" fill="#fff" stroke="#333" stroke-width="1.6"/></svg>
<svg class="r" style="left:1261px;top:880px;" width="20" height="20" viewBox="0 0 20 20"><rect x="1" y="1" width="18" height="18" fill="#fff" stroke="#333" stroke-width="1.6"/></svg>
<svg class="r" style="left:1641px;top:880px;" width="20" height="20" viewBox="0 0 20 20"><rect x="1" y="1" width="18" height="18" fill="#fff" stroke="#333" stroke-width="1.6"/></svg>
<div class="t" style="right:1978.00px;top:912.31px;font-size:17px;line-height:17px;font-weight:bold;-webkit-text-stroke:0.3px;color:#000;text-align:right;letter-spacing:1.381px;margin-right:-1.381px;">6221</div>
<div class="t" style="left:186.20px;top:912.31px;font-size:17px;line-height:17px;font-weight:bold;-webkit-text-stroke:0.3px;color:#000;letter-spacing:0.236px;">КЗ Бершадський РЦПМСД</div>
<div class="t" style="left:844.00px;top:912.31px;font-size:17px;line-height:17px;font-weight:bold;-webkit-text-stroke:0.3px;color:#000;letter-spacing:1.381px;">5832</div>
<svg class="r" style="left:1096px;top:909px;" width="20" height="20" viewBox="0 0 20 20"><rect x="1" y="1" width="18" height="18" fill="#fff" stroke="#333" stroke-width="1.6"/></svg>
<svg class="r" style="left:1261px;top:909px;" width="20" height="20" viewBox="0 0 20 20"><rect x="1" y="1" width="18" height="18" fill="#fff" stroke="#333" stroke-width="1.6"/></svg>
<svg class="r" style="left:1641px;top:909px;" width="20" height="20" viewBox="0 0 20 20"><rect x="1" y="1" width="18" height="18" fill="#fff" stroke="#333" stroke-width="1.6"/></svg>
<div class="t" style="right:1978.00px;top:941.31px;font-size:17px;line-height:17px;font-weight:bold;-webkit-text-stroke:0.3px;color:#000;text-align:right;letter-spacing:1.381px;margin-right:-1.381px;">6222</div>
<div class="t" style="left:186.20px;top:941.31px;font-size:17px;line-height:17px;font-weight:bold;-webkit-text-stroke:0.3px;color:#000;letter-spacing:-0.283px;">КЗ Богуславський РЦПМСД</div>
<div class="t" style="left:844.00px;top:941.31px;font-size:17px;line-height:17px;font-weight:bold;-webkit-text-stroke:0.3px;color:#000;letter-spacing:1.381px;">5827</div>
<svg class="r" style="left:1096px;top:938px;" width="20" height="20" viewBox="0 0 20 20"><rect x="1" y="1" width="18" height="18" fill="#fff" stroke="#333" stroke-width="1.6"/></svg>
<svg class="r" style="left:1261px;top:938px;" width="20" height="20" viewBox="0 0 20 20"><rect x="1" y="1" width="18" height="18" fill="#fff" stroke="#333" stroke-width="1.6"/></svg>
<svg class="r" style="left:1641px;top:938px;" width="20" height="20" viewBox="0 0 20 20"><rect x="1" y="1" width="18" height="18" fill="#fff" stroke="#333" stroke-width="1.6"/></svg>
<div class="t" style="right:1978.00px;top:969.31px;font-size:17px;line-height:17px;font-weight:bold;-webkit-text-stroke:0.3px;color:#000;text-align:right;letter-spacing:1.381px;margin-right:-1.381px;">6223</div>
<div class="t" style="left:186.20px;top:969.31px;font-size:17px;line-height:17px;font-weight:bold;-webkit-text-stroke:0.3px;color:#000;letter-spacing:0.115px;">КЗ Вінницький ЦПМСД</div>
<div class="t" style="left:844.00px;top:969.31px;font-size:17px;line-height:17px;font-weight:bold;-webkit-text-stroke:0.3px;color:#000;letter-spacing:1.381px;">5831</div>
<svg class="r" style="left:1096px;top:966px;" width="20" height="20" viewBox="0 0 20 20"><rect x="1" y="1" width="18" height="18" fill="#fff" stroke="#333" stroke-width="1.6"/></svg>
<svg class="r" style="left:1261px;top:966px;" width="20" height="20" viewBox="0 0 20 20"><rect x="1" y="1" width="18" height="18" fill="#fff" stroke="#333" stroke-width="1.6"/></svg>
<svg class="r" style="left:1641px;top:966px;" width="20" height="20" viewBox="0 0 20 20"><rect x="1" y="1" width="18" height="18" fill="#fff" stroke="#333" stroke-width="1.6"/></svg>
<div class="t" style="right:1978.00px;top:998.31px;font-size:17px;line-height:17px;font-weight:bold;-webkit-text-stroke:0.3px;color:#000;text-align:right;letter-spacing:1.381px;margin-right:-1.381px;">6224</div>
<div class="t" style="left:186.20px;top:998.31px;font-size:17px;line-height:17px;font-weight:bold;-webkit-text-stroke:0.3px;color:#000;letter-spacing:0.079px;">КЗ Калинівський РЦПМСД</div>
<div class="t" style="left:844.00px;top:998.31px;font-size:17px;line-height:17px;font-weight:bold;-webkit-text-stroke:0.3px;color:#000;letter-spacing:1.381px;">5828</div>
<svg class="r" style="left:1096px;top:994px;" width="20" height="20" viewBox="0 0 20 20"><rect x="1" y="1" width="18" height="18" fill="#fff" stroke="#333" stroke-width="1.6"/></svg>
<svg class="r" style="left:1261px;top:994px;" width="20" height="20" viewBox="0 0 20 20"><rect x="1" y="1" width="18" height="18" fill="#fff" stroke="#333" stroke-width="1.6"/></svg>
<svg class="r" style="left:1641px;top:994px;" width="20" height="20" viewBox="0 0 20 20"><rect x="1" y="1" width="18" height="18" fill="#fff" stroke="#333" stroke-width="1.6"/></svg>
<div class="t" style="right:1978.00px;top:1026.31px;font-size:17px;line-height:17px;font-weight:bold;-webkit-text-stroke:0.3px;color:#000;text-align:right;letter-spacing:1.381px;margin-right:-1.381px;">6225</div>
<div class="t" style="left:186.20px;top:1026.31px;font-size:17px;line-height:17px;font-weight:bold;-webkit-text-stroke:0.3px;color:#000;letter-spacing:0.286px;">КЗ Кодроменский РЦПМСД</div>
<div class="t" style="left:844.00px;top:1026.31px;font-size:17px;line-height:17px;font-weight:bold;-webkit-text-stroke:0.3px;color:#000;letter-spacing:1.381px;">5838</div>
<div class="t" style="left:2033.70px;top:1026.31px;font-size:17px;line-height:17px;font-weight:bold;-webkit-text-stroke:0.3px;color:#000;letter-spacing:0.600px;width:101px;overflow:hidden;">с.Малі-Бубни</div>
<svg class="r" style="left:1096px;top:1023px;" width="20" height="20" viewBox="0 0 20 20"><rect x="1" y="1" width="18" height="18" fill="#fff" stroke="#333" stroke-width="1.6"/></svg>
<svg class="r" style="left:1261px;top:1023px;" width="20" height="20" viewBox="0 0 20 20"><rect x="1" y="1" width="18" height="18" fill="#fff" stroke="#333" stroke-width="1.6"/></svg>
<svg class="r" style="left:1641px;top:1023px;" width="20" height="20" viewBox="0 0 20 20"><rect x="1" y="1" width="18" height="18" fill="#fff" stroke="#333" stroke-width="1.6"/></svg>
<div class="t" style="right:1978.00px;top:1055.31px;font-size:17px;line-height:17px;font-weight:bold;-webkit-text-stroke:0.3px;color:#000;text-align:right;letter-spacing:1.381px;margin-right:-1.381px;">6226</div>
<div class="t" style="left:186.20px;top:1055.31px;font-size:17px;line-height:17px;font-weight:bold;-webkit-text-stroke:0.3px;color:#000;letter-spacing:0.149px;">КЗ Кривоозерський РЦПМСД</div>
<div class="t" style="left:844.00px;top:1055.31px;font-size:17px;line-height:17px;font-weight:bold;-webkit-text-stroke:0.3px;color:#000;letter-spacing:1.381px;">5834</div>
<svg class="r" style="left:1096px;top:1052px;" width="20" height="20" viewBox="0 0 20 20"><rect x="1" y="1" width="18" height="18" fill="#fff" stroke="#333" stroke-width="1.6"/></svg>
<svg class="r" style="left:1261px;top:1052px;" width="20" height="20" viewBox="0 0 20 20"><rect x="1" y="1" width="18" height="18" fill="#fff" stroke="#333" stroke-width="1.6"/></svg>
<svg class="r" style="left:1641px;top:1052px;" width="20" height="20" viewBox="0 0 20 20"><rect x="1" y="1" width="18" height="18" fill="#fff" stroke="#333" stroke-width="1.6"/></svg>
<div class="t" style="right:1978.00px;top:1083.31px;font-size:17px;line-height:17px;font-weight:bold;-webkit-text-stroke:0.3px;color:#000;text-align:right;letter-spacing:1.381px;margin-right:-1.381px;">6227</div>
<div class="t" style="left:186.20px;top:1083.31px;font-size:17px;line-height:17px;font-weight:bold;-webkit-text-stroke:0.3px;color:#000;letter-spacing:0.213px;">КЗ Липовецький РЦПМСД</div>
<div class="t" style="left:844.00px;top:1083.31px;font-size:17px;line-height:17px;font-weight:bold;-webkit-text-stroke:0.3px;color:#000;letter-spacing:1.381px;">5829</div>
<svg class="r" style="left:1096px;top:1080px;" width="20" height="20" viewBox="0 0 20 20"><rect x="1" y="1" width="18" height="18" fill="#fff" stroke="#333" stroke-width="1.6"/></svg>
<svg class="r" style="left:1261px;top:1080px;" width="20" height="20" viewBox="0 0 20 20"><rect x="1" y="1" width="18" height="18" fill="#fff" stroke="#333" stroke-width="1.6"/></svg>
<svg class="r" style="left:1641px;top:1080px;" width="20" height="20" viewBox="0 0 20 20"><rect x="1" y="1" width="18" height="18" fill="#fff" stroke="#333" stroke-width="1.6"/></svg>
<div class="t" style="right:1978.00px;top:1112.31px;font-size:17px;line-height:17px;font-weight:bold;-webkit-text-stroke:0.3px;color:#000;text-align:right;letter-spacing:1.381px;margin-right:-1.381px;">6228</div>
<div class="t" style="left:186.20px;top:1112.31px;font-size:17px;line-height:17px;font-weight:bold;-webkit-text-stroke:0.3px;color:#000;letter-spacing:-0.070px;">КЗ Новоархангельський РЦПМСД</div>
<div class="t" style="left:844.00px;top:1112.31px;font-size:17px;line-height:17px;font-weight:bold;-webkit-text-stroke:0.3px;color:#000;letter-spacing:1.381px;">5836</div>
<svg class="r" style="left:1096px;top:1108px;" width="20" height="20" viewBox="0 0 20 20"><rect x="1" y="1" width="18" height="18" fill="#fff" stroke="#333" stroke-width="1.6"/></svg>
<svg class="r" style="left:1261px;top:1108px;" width="20" height="20" viewBox="0 0 20 20"><rect x="1" y="1" width="18" height="18" fill="#fff" stroke="#333" stroke-width="1.6"/></svg>
<svg class="r" style="left:1641px;top:1108px;" width="20" height="20" viewBox="0 0 20 20"><rect x="1" y="1" width="18" height="18" fill="#fff" stroke="#333" stroke-width="1.6"/></svg>
<div class="t" style="right:1978.00px;top:1140.31px;font-size:17px;line-height:17px;font-weight:bold;-webkit-text-stroke:0.3px;color:#000;text-align:right;letter-spacing:1.381px;margin-right:-1.381px;">6229</div>
<div class="t" style="left:186.20px;top:1140.31px;font-size:17px;line-height:17px;font-weight:bold;-webkit-text-stroke:0.3px;color:#000;letter-spacing:0.225px;">КЗ Погребищенський РЦПМСД</div>
<div class="t" style="left:844.00px;top:1140.31px;font-size:17px;line-height:17px;font-weight:bold;-webkit-text-stroke:0.3px;color:#000;letter-spacing:1.381px;">5833</div>
<svg class="r" style="left:1096px;top:1137px;" width="20" height="20" viewBox="0 0 20 20"><rect x="1" y="1" width="18" height="18" fill="#fff" stroke="#333" stroke-width="1.6"/></svg>
<svg class="r" style="left:1261px;top:1137px;" width="20" height="20" viewBox="0 0 20 20"><rect x="1" y="1" width="18" height="18" fill="#fff" stroke="#333" stroke-width="1.6"/></svg>
<svg class="r" style="left:1641px;top:1137px;" width="20" height="20" viewBox="0 0 20 20"><rect x="1" y="1" width="18" height="18" fill="#fff" stroke="#333" stroke-width="1.6"/></svg>
<div class="t" style="right:1978.00px;top:1169.31px;font-size:17px;line-height:17px;font-weight:bold;-webkit-text-stroke:0.3px;color:#000;text-align:right;letter-spacing:1.381px;margin-right:-1.381px;">6230</div>
<div class="t" style="left:186.20px;top:1169.31px;font-size:17px;line-height:17px;font-weight:bold;-webkit-text-stroke:0.3px;color:#000;letter-spacing:0.030px;">КЗ Срібнянський РЦПМСД</div>
<div class="t" style="left:844.00px;top:1169.31px;font-size:17px;line-height:17px;font-weight:bold;-webkit-text-stroke:0.3px;color:#000;letter-spacing:1.381px;">5835</div>
<svg class="r" style="left:1096px;top:1166px;" width="20" height="20" viewBox="0 0 20 20"><rect x="1" y="1" width="18" height="18" fill="#fff" stroke="#333" stroke-width="1.6"/></svg>
<svg class="r" style="left:1261px;top:1166px;" width="20" height="20" viewBox="0 0 20 20"><rect x="1" y="1" width="18" height="18" fill="#fff" stroke="#333" stroke-width="1.6"/></svg>
<svg class="r" style="left:1641px;top:1166px;" width="20" height="20" viewBox="0 0 20 20"><rect x="1" y="1" width="18" height="18" fill="#fff" stroke="#333" stroke-width="1.6"/></svg>
<div class="t" style="right:1978.00px;top:1197.31px;font-size:17px;line-height:17px;font-weight:bold;-webkit-text-stroke:0.3px;color:#000;text-align:right;letter-spacing:1.381px;margin-right:-1.381px;">6231</div>
<div class="t" style="left:186.20px;top:1197.31px;font-size:17px;line-height:17px;font-weight:bold;-webkit-text-stroke:0.3px;color:#000;letter-spacing:0.478px;">КЗ Талалаївська ЦРЛ</div>
<div class="t" style="left:844.00px;top:1197.31px;font-size:17px;line-height:17px;font-weight:bold;-webkit-text-stroke:0.3px;color:#000;letter-spacing:1.381px;">5830</div>
<svg class="r" style="left:1096px;top:1194px;" width="20" height="20" viewBox="0 0 20 20"><rect x="1" y="1" width="18" height="18" fill="#fff" stroke="#333" stroke-width="1.6"/></svg>
<svg class="r" style="left:1261px;top:1194px;" width="20" height="20" viewBox="0 0 20 20"><rect x="1" y="1" width="18" height="18" fill="#fff" stroke="#333" stroke-width="1.6"/></svg>
<svg class="r" style="left:1641px;top:1194px;" width="20" height="20" viewBox="0 0 20 20"><rect x="1" y="1" width="18" height="18" fill="#fff" stroke="#333" stroke-width="1.6"/></svg>
<div class="r" style="left:17px;top:280px;width:1px;height:945px;background:#9c9c9c;"></div>
<div class="r" style="left:183px;top:280px;width:1px;height:945px;background:#9c9c9c;"></div>
<div class="r" style="left:722px;top:280px;width:1px;height:945px;background:#9c9c9c;"></div>
<div class="r" style="left:840px;top:280px;width:1px;height:945px;background:#9c9c9c;"></div>
<div class="r" style="left:1026px;top:280px;width:1px;height:945px;background:#9c9c9c;"></div>
<div class="r" style="left:1187px;top:280px;width:1px;height:945px;background:#9c9c9c;"></div>
<div class="r" style="left:1355px;top:280px;width:1px;height:945px;background:#9c9c9c;"></div>
<div class="r" style="left:1557px;top:280px;width:1px;height:945px;background:#9c9c9c;"></div>
<div class="r" style="left:1745px;top:280px;width:1px;height:945px;background:#9c9c9c;"></div>
<div class="r" style="left:2030px;top:280px;width:1px;height:945px;background:#9c9c9c;"></div>
<div class="r" style="left:0px;top:307px;width:2135px;height:1px;background:#9c9c9c;"></div>
<div class="r" style="left:0px;top:336px;width:2135px;height:1px;background:#9c9c9c;"></div>
<div class="r" style="left:0px;top:364px;width:2135px;height:1px;background:#9c9c9c;"></div>
<div class="r" style="left:0px;top:393px;width:2135px;height:1px;background:#9c9c9c;"></div>
<div class="r" style="left:0px;top:421px;width:2135px;height:1px;background:#9c9c9c;"></div>
<div class="r" style="left:0px;top:450px;width:2135px;height:1px;background:#9c9c9c;"></div>
<div class="r" style="left:0px;top:478px;width:2135px;height:1px;background:#9c9c9c;"></div>
<div class="r" style="left:0px;top:507px;width:2135px;height:1px;background:#9c9c9c;"></div>
<div class="r" style="left:0px;top:535px;width:2135px;height:1px;background:#9c9c9c;"></div>
<div class="r" style="left:0px;top:564px;width:2135px;height:1px;background:#9c9c9c;"></div>
<div class="r" style="left:0px;top:592px;width:2135px;height:1px;background:#9c9c9c;"></div>
<div class="r" style="left:0px;top:621px;width:2135px;height:1px;background:#9c9c9c;"></div>
<div class="r" style="left:0px;top:649px;width:2135px;height:1px;background:#9c9c9c;"></div>
<div class="r" style="left:0px;top:678px;width:2135px;height:1px;background:#9c9c9c;"></div>
<div class="r" style="left:0px;top:706px;width:2135px;height:1px;background:#9c9c9c;"></div>
<div class="r" style="left:0px;top:735px;width:2135px;height:1px;background:#9c9c9c;"></div>
<div class="r" style="left:0px;top:763px;width:2135px;height:1px;background:#9c9c9c;"></div>
<div class="r" style="left:0px;top:792px;width:2135px;height:1px;background:#9c9c9c;"></div>
<div class="r" style="left:0px;top:820px;width:2135px;height:1px;background:#9c9c9c;"></div>
<div class="r" style="left:0px;top:849px;width:2135px;height:1px;background:#9c9c9c;"></div>
<div class="r" style="left:0px;top:877px;width:2135px;height:1px;background:#9c9c9c;"></div>
<div class="r" style="left:0px;top:906px;width:2135px;height:1px;background:#9c9c9c;"></div>
<div class="r" style="left:0px;top:934px;width:2135px;height:1px;background:#9c9c9c;"></div>
<div class="r" style="left:0px;top:963px;width:2135px;height:1px;background:#9c9c9c;"></div>
<div class="r" style="left:0px;top:991px;width:2135px;height:1px;background:#9c9c9c;"></div>
<div class="r" style="left:0px;top:1020px;width:2135px;height:1px;background:#9c9c9c;"></div>
<div class="r" style="left:0px;top:1048px;width:2135px;height:1px;background:#9c9c9c;"></div>
<div class="r" style="left:0px;top:1077px;width:2135px;height:1px;background:#9c9c9c;"></div>
<div class="r" style="left:0px;top:1105px;width:2135px;height:1px;background:#9c9c9c;"></div>
<div class="r" style="left:0px;top:1134px;width:2135px;height:1px;background:#9c9c9c;"></div>
<div class="r" style="left:0px;top:1162px;width:2135px;height:1px;background:#9c9c9c;"></div>
<div class="r" style="left:0px;top:1191px;width:2135px;height:1px;background:#9c9c9c;"></div>
<div class="r" style="left:0px;top:1219px;width:2135px;height:1px;background:#9c9c9c;"></div>
<div class="r" style="left:0px;top:1224px;width:2135px;height:2px;background:#a0a0a0;"></div>
<div class="r" style="left:0px;top:1226px;width:2135px;height:32px;background:#f0f0f0;"></div>
<div class="r" style="left:17px;top:1226px;width:1px;height:32px;background:#b4b4b4;"></div>
<div class="r" style="left:187px;top:1229px;width:534px;height:27px;background:#e7eaeb;border:1px solid #dcdfe0;box-sizing:border-box;"></div>
<div class="t" style="left:190.00px;top:1234.11px;font-size:17px;line-height:17px;font-weight:bold;-webkit-text-stroke:0.3px;color:#111;letter-spacing:0.480px;">Запис 922 із 2252</div>
<div class="r" style="left:0px;top:1258px;width:2135px;height:1px;background:#d0d0d0;"></div>
<div class="r" style="left:2135px;top:197px;width:1px;height:1061px;background:#fbfbfb;"></div>
<div class="r" style="left:2136px;top:197px;width:23px;height:1062px;background:#f0f0f0;"></div>
<svg class="r" style="left:2140px;top:203px;" width="14" height="14" viewBox="0 0 14 14"><path d="M2 10 L7 4.5 L12 10" fill="none" stroke="#606060" stroke-width="2.4"/></svg>
<svg class="r" style="left:2140px;top:1240px;" width="14" height="14" viewBox="0 0 14 14"><path d="M2 4 L7 9.5 L12 4" fill="none" stroke="#606060" stroke-width="2.4"/></svg>
<div class="r" style="left:2137px;top:631px;width:21px;height:23px;background:#cdcdcd;"></div>
<svg class="r" style="left:5px;top:1265px;" width="14" height="14" viewBox="0 0 14 14"><path d="M10 2 L4.5 7 L10 12" fill="none" stroke="#606060" stroke-width="2.4"/></svg>
<div class="r" style="left:26px;top:1262px;width:424px;height:21px;background:#cdcdcd;"></div>
<svg class="r" style="left:2115px;top:1265px;" width="14" height="14" viewBox="0 0 14 14"><path d="M4 2 L9.5 7 L4 12" fill="none" stroke="#606060" stroke-width="2.4"/></svg>
<div class="r" style="left:6px;top:1288px;width:19px;height:19px;background:#ffffff;border:1.6px solid #333;box-sizing:border-box;"></div>
<div class="t" style="left:28.90px;top:1289.91px;font-size:17px;line-height:17px;color:#1a1a2a;letter-spacing:0.059px;">Показувати деталі</div>
<div class="r" style="left:4px;top:1314px;width:188px;height:34px;background:#f0f0f0;border:2px solid #1e1e1e;box-sizing:border-box;"></div>
<div class="t" style="left:9.30px;top:1322.03px;font-size:16.5px;line-height:16.5px;color:#111;letter-spacing:-0.025px;">Головна</div>
<div class="r" style="left:195px;top:1314px;width:188px;height:34px;background:#ffd0a4;border:2px solid #3392e6;box-sizing:border-box;"></div>
<div class="t" style="left:199.00px;top:1322.03px;font-size:16.5px;line-height:16.5px;color:#111;letter-spacing:-0.950px;">Фірми</div>
<div class="r" style="left:0px;top:1351px;width:2159px;height:1px;background:#d6d6d6;"></div>
<div class="r" style="left:297px;top:1354px;width:1px;height:24px;background:#d8d8d8;"></div>
<div class="r" style="left:603px;top:1354px;width:1px;height:24px;background:#d8d8d8;"></div>
<div class="r" style="left:662px;top:1354px;width:1px;height:24px;background:#d8d8d8;"></div>
<div class="r" style="left:1118px;top:1354px;width:1px;height:24px;background:#d8d8d8;"></div>
<svg class="r" style="left:4px;top:1356px;" width="20" height="23" viewBox="0 0 20 23"><path d="M1 3 Q1 1 3 1 H16 Q19 1.5 19 4 V20 Q19 22 17 22 H4 Q1 21 1 19 Z" fill="#8c84c0"/><rect x="1.5" y="1.5" width="17" height="5" rx="1" fill="#dcdcf4"/><rect x="1.5" y="7" width="17" height="2.6" fill="#1e76d6"/><rect x="1.5" y="10.6" width="17" height="2.6" fill="#2a82dc"/><rect x="1.5" y="14.2" width="17" height="2.6" fill="#1e76d6"/><rect x="1.5" y="17.6" width="17" height="3" fill="#7668a8"/><rect x="2.5" y="8" width="1.6" height="1.6" fill="#e8f0ff"/><rect x="2.5" y="11.5" width="1.6" height="1.6" fill="#e8f0ff"/></svg>
<div class="t" style="left:30.00px;top:1358.41px;font-size:17px;line-height:17px;color:#111;letter-spacing:-0.278px;">База даних: TASA3@TITAN</div>
<svg class="r" style="left:303px;top:1356px;" width="18" height="22" viewBox="0 0 18 22"><circle cx="7" cy="7.5" r="5.5" fill="#ec3a12"/><circle cx="10" cy="9.5" r="4.8" fill="#a0a2e6"/><circle cx="9" cy="8.5" r="2" fill="#d8dcf8"/><path d="M1.5 22 Q2 14.5 10 14.5 Q17.5 14.5 17.5 22 Z" fill="#aeb0ec"/><path d="M7.5 15 L10 18.5 L12.5 15 Z" fill="#e89a50"/></svg>
<div class="t" style="left:329.00px;top:1358.41px;font-size:17px;line-height:17px;color:#111;letter-spacing:-0.470px;">Користувач: GIFT</div>
<svg class="r" style="left:606px;top:1355px;" width="23" height="23" viewBox="0 0 23 23"><path d="M2 12 Q3 4 11 3.5 Q19 4 21 11 V20 L17 22 L13 19 L8 22 L2 20 Z" fill="#8a90dc"/><path d="M5 13 Q8 7 13 7" fill="none" stroke="#c8ccf4" stroke-width="2"/><path d="M4.5 15 L3 22 M15 16 L13.5 23" stroke="#e8c020" stroke-width="2.6"/></svg>
<div class="t" style="left:635.80px;top:1358.71px;font-size:17px;line-height:17px;color:#111;">2</div>
<div class="t" style="left:666.70px;top:1358.41px;font-size:17px;line-height:17px;color:#111;letter-spacing:-0.219px;">Кассовый аппарат не подключен</div>
<div class="t" style="left:1122.40px;top:1358.41px;font-size:17px;line-height:17px;color:#111;letter-spacing:-0.290px;">Зона: Склад [1]</div>
<svg class="r" style="left:0px;top:0px;pointer-events:none;" width="700" height="520" viewBox="0 0 700 520"><path d="M186.51 208.36 L190.49 202.84 L585.67 490.35 L584.73 491.65 Z" fill="#f00"/><path d="M175.8 196.2 L193.2 199.6 L190.3 202.6 L186.6 207.4 L183.6 211.8 Z" fill="#f00" stroke="#f00" stroke-width="1.6" stroke-linejoin="round"/></svg>
</body></html>
